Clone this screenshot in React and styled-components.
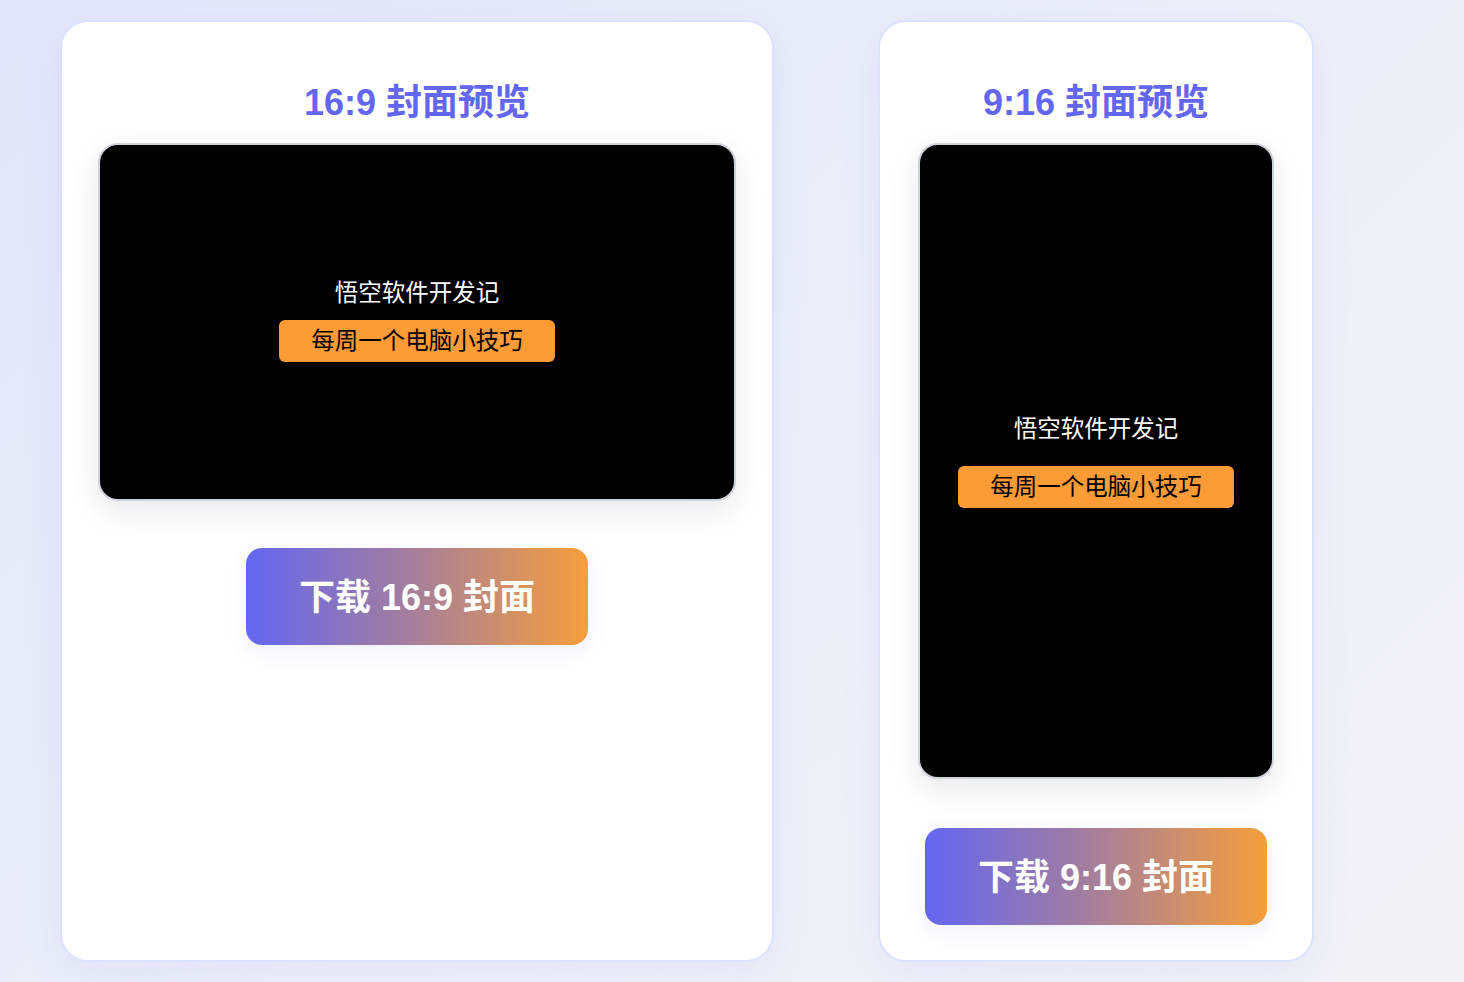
import React from 'react'
import styled, { createGlobalStyle } from 'styled-components'

const GlobalStyle = createGlobalStyle`
html, body {
    margin: 0;
    padding: 0;
}
body {
    min-height: 100vh;
    background: linear-gradient(135deg, #e3e6fa 0%, #eceef8 50%, #f2f2f6 100%);
    font-family: "Liberation Sans", "Noto Sans CJK SC", sans-serif;
}
`

const Page = styled.div`
display: flex;
align-items: stretch;
gap: 104px;
padding: 20px 60px;
height: 982px;
box-sizing: border-box;
`

const Card = styled.section`
width: ${p => p.$width}px;
box-sizing: border-box;
background: #fff;
border: 2px solid #dbe2fe;
border-radius: 28px;
box-shadow: 0 10px 40px rgba(99, 102, 241, 0.08);
display: flex;
flex-direction: column;
align-items: center;
padding: 58px 36px 0;
`

const Title = styled.h2`
margin: 0 0 17px;
font-size: 36px;
line-height: 46px;
font-weight: 700;
color: #6366f1;
`

const Preview = styled.div`
width: ${p => p.$w}px;
height: ${p => p.$h}px;
box-sizing: border-box;
padding-bottom: ${p => p.$lift}px;
background: #000;
border: 2px solid #cfd3da;
border-radius: 20px;
box-shadow: 0 10px 30px rgba(30, 30, 60, 0.1);
display: flex;
flex-direction: column;
align-items: center;
justify-content: center;
gap: ${p => p.$gap}px;
`

const Channel = styled.div`
color: #fff;
font-size: 23.5px;
line-height: 30px;
`

const Tag = styled.div`
background: #fd9b37;
color: #000;
font-size: 23.5px;
line-height: 42px;
padding: 0 32px;
border-radius: 6px;
`

const DownloadButton = styled.button`
margin-top: ${p => p.$top}px;
width: 342px;
height: 97px;
padding: 0 0 5px;
border: none;
border-radius: 16px;
background: linear-gradient(90deg, #6366f1 0%, #a47e9c 48%, #f59e3b 100%);
color: #fff;
font-family: inherit;
font-size: 36px;
font-weight: 700;
box-shadow: 0 6px 20px rgba(99, 102, 241, 0.1);
cursor: pointer;
`

const covers = [
    { ratio: '16:9', card: 714, w: 638, h: 358, gap: 12, lift: 4, top: 47 },
    { ratio: '9:16', card: 436, w: 356, h: 636, gap: 22, lift: 0, top: 49 },
]

const App = () => {
    return (
        <>
            <GlobalStyle />
            <Page>
                {covers.map(c => (
                    <Card key={c.ratio} $width={c.card}>
                        <Title>{c.ratio} 封面预览</Title>
                        <Preview $w={c.w} $h={c.h} $gap={c.gap} $lift={c.lift}>
                            <Channel>悟空软件开发记</Channel>
                            <Tag>每周一个电脑小技巧</Tag>
                        </Preview>
                        <DownloadButton $top={c.top}>下载 {c.ratio} 封面</DownloadButton>
                    </Card>
                ))}
            </Page>
        </>
    )
}

export default App
